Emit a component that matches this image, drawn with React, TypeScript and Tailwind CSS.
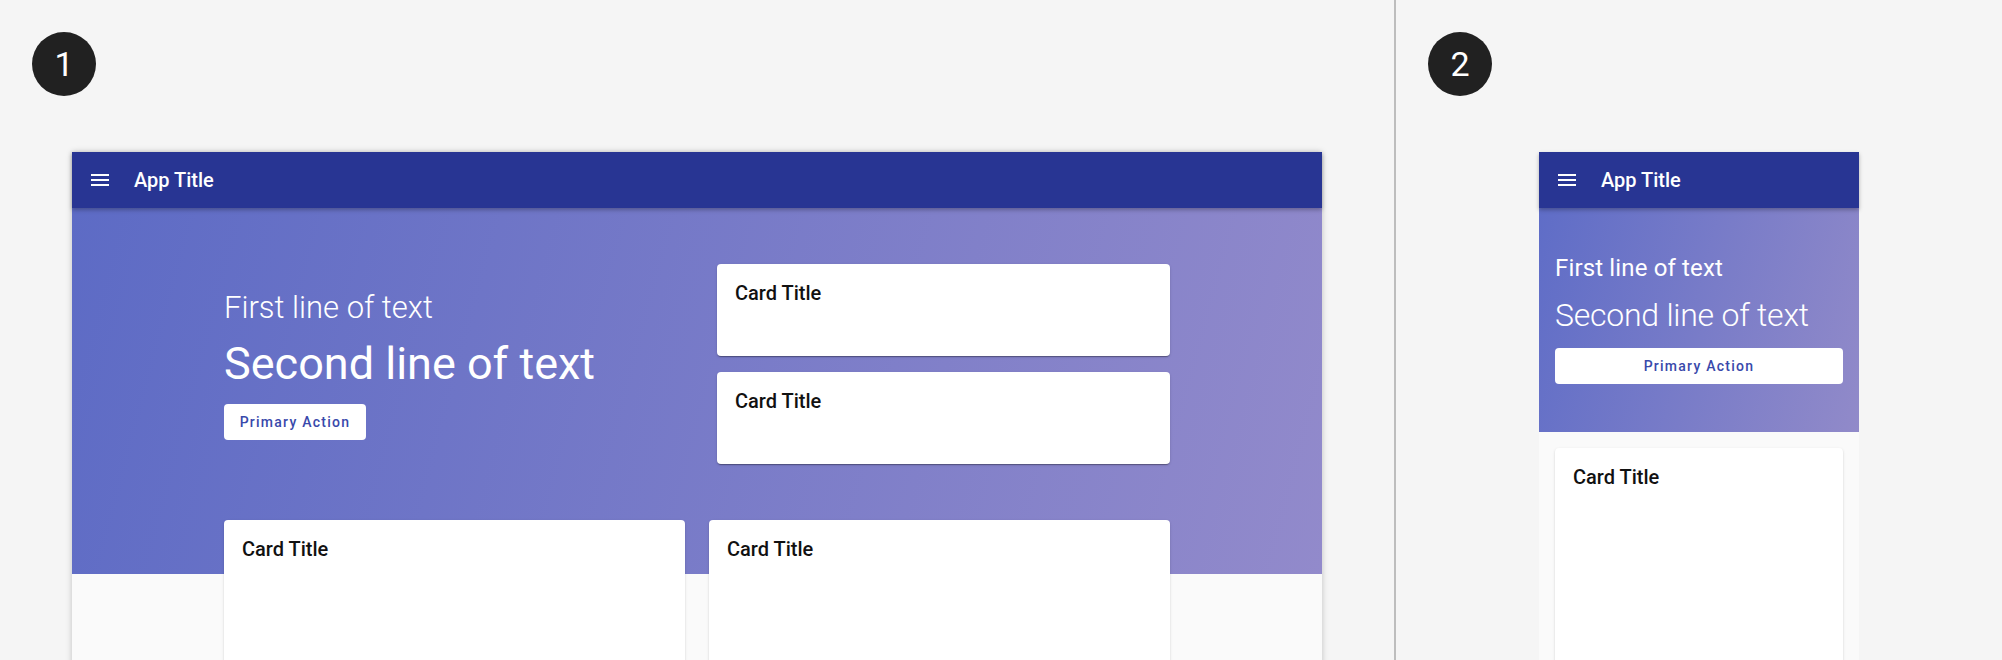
import React from 'react';

const MenuIcon: React.FC = () => (
  <svg width="24" height="24" viewBox="0 0 24 24" fill="white">
    <path d="M3 18h18v-2H3v2zm0-5h18v-2H3v2zm0-7v2h18V6H3z" />
  </svg>
);

const Badge: React.FC<{ n: number }> = ({ n }) => (
  <div className="flex h-16 w-16 shrink-0 items-center justify-center rounded-full bg-[#212121] text-[34px] leading-none text-white">
    {n}
  </div>
);

const TopBar: React.FC = () => (
  <header className="relative z-10 flex h-14 shrink-0 items-center bg-[#283593] pl-4 shadow-[0_2px_4px_rgba(0,0,0,0.28)]">
    <MenuIcon />
    <span className="ml-[22px] text-[20px] font-medium text-white">App Title</span>
  </header>
);

const PrimaryButton: React.FC<{ full?: boolean }> = ({ full }) => (
  <button
    className={
      full
        ? 'h-9 w-full rounded bg-white text-[14px] font-medium tracking-[1.25px] text-[#3949ab]'
        : 'h-9 w-[142px] rounded bg-white text-[14px] font-medium tracking-[1.25px] text-[#3949ab]'
    }
  >
    Primary Action
  </button>
);

const Card: React.FC<{ className: string }> = ({ className }) => (
  <div
    className={`rounded bg-white pt-[17px] pr-4 pl-[18px] shadow-[0_2px_1px_-1px_rgba(0,0,0,0.2),0_1px_1px_0_rgba(0,0,0,0.14),0_1px_3px_0_rgba(0,0,0,0.12)] ${className}`}
  >
    <h3 className="text-[20px] font-medium leading-[25px] text-[#111]">Card Title</h3>
  </div>
);

export default function App() {
  return (
    <div className="flex h-[660px] w-[2002px] overflow-hidden bg-[#f5f5f5] font-['Roboto',sans-serif]">
      {/* desktop */}
      <section className="flex w-[1394px] shrink-0 flex-col p-8">
        <Badge n={1} />
        <div className="mx-auto mt-14 flex w-[1250px] flex-col shadow-[0_0_6px_rgba(0,0,0,0.22)]">
          <TopBar />
          <div className="bg-[#fafafa] bg-[linear-gradient(105deg,#5d6bc5,#928acb)] bg-[length:100%_366px] bg-no-repeat">
            <div className="mx-auto w-[946px] pt-14 pb-16">
              <div className="grid grid-cols-[469px_453px] items-center gap-x-6">
                <div className="flex flex-col text-white">
                  <p className="text-[31px] font-light leading-[40px]">First line of text</p>
                  <p className="mt-[8px] text-[45px] leading-[56px]">Second line of text</p>
                  <div className="mt-3">
                    <PrimaryButton />
                  </div>
                </div>
                <div className="flex flex-col gap-4">
                  <Card className="h-[92px]" />
                  <Card className="h-[92px]" />
                </div>
              </div>
              <div className="mt-14 grid grid-cols-2 gap-6">
                <Card className="h-[300px]" />
                <Card className="h-[300px]" />
              </div>
            </div>
          </div>
        </div>
      </section>

      <div className="w-[2px] shrink-0 bg-[#bdbdbd]" />

      {/* mobile */}
      <section className="flex flex-1 flex-col p-8">
        <Badge n={2} />
        <div className="mx-auto mt-14 flex w-[320px] flex-col bg-[#fafafa]">
          <TopBar />
          <div className="bg-[linear-gradient(105deg,#5f6dc7,#918ac9)] px-4 pt-[44px] pb-12 text-white">
            <p className="text-[24px] tracking-[0.15px] leading-[32px]">First line of text</p>
            <p className="mt-[11px] text-[32px] font-light tracking-[-0.25px] leading-[40px]">Second line of text</p>
            <div className="mt-[13px]">
              <PrimaryButton full />
            </div>
          </div>
          <div className="p-4">
            <Card className="h-[300px]" />
          </div>
        </div>
      </section>
    </div>
  );
}
